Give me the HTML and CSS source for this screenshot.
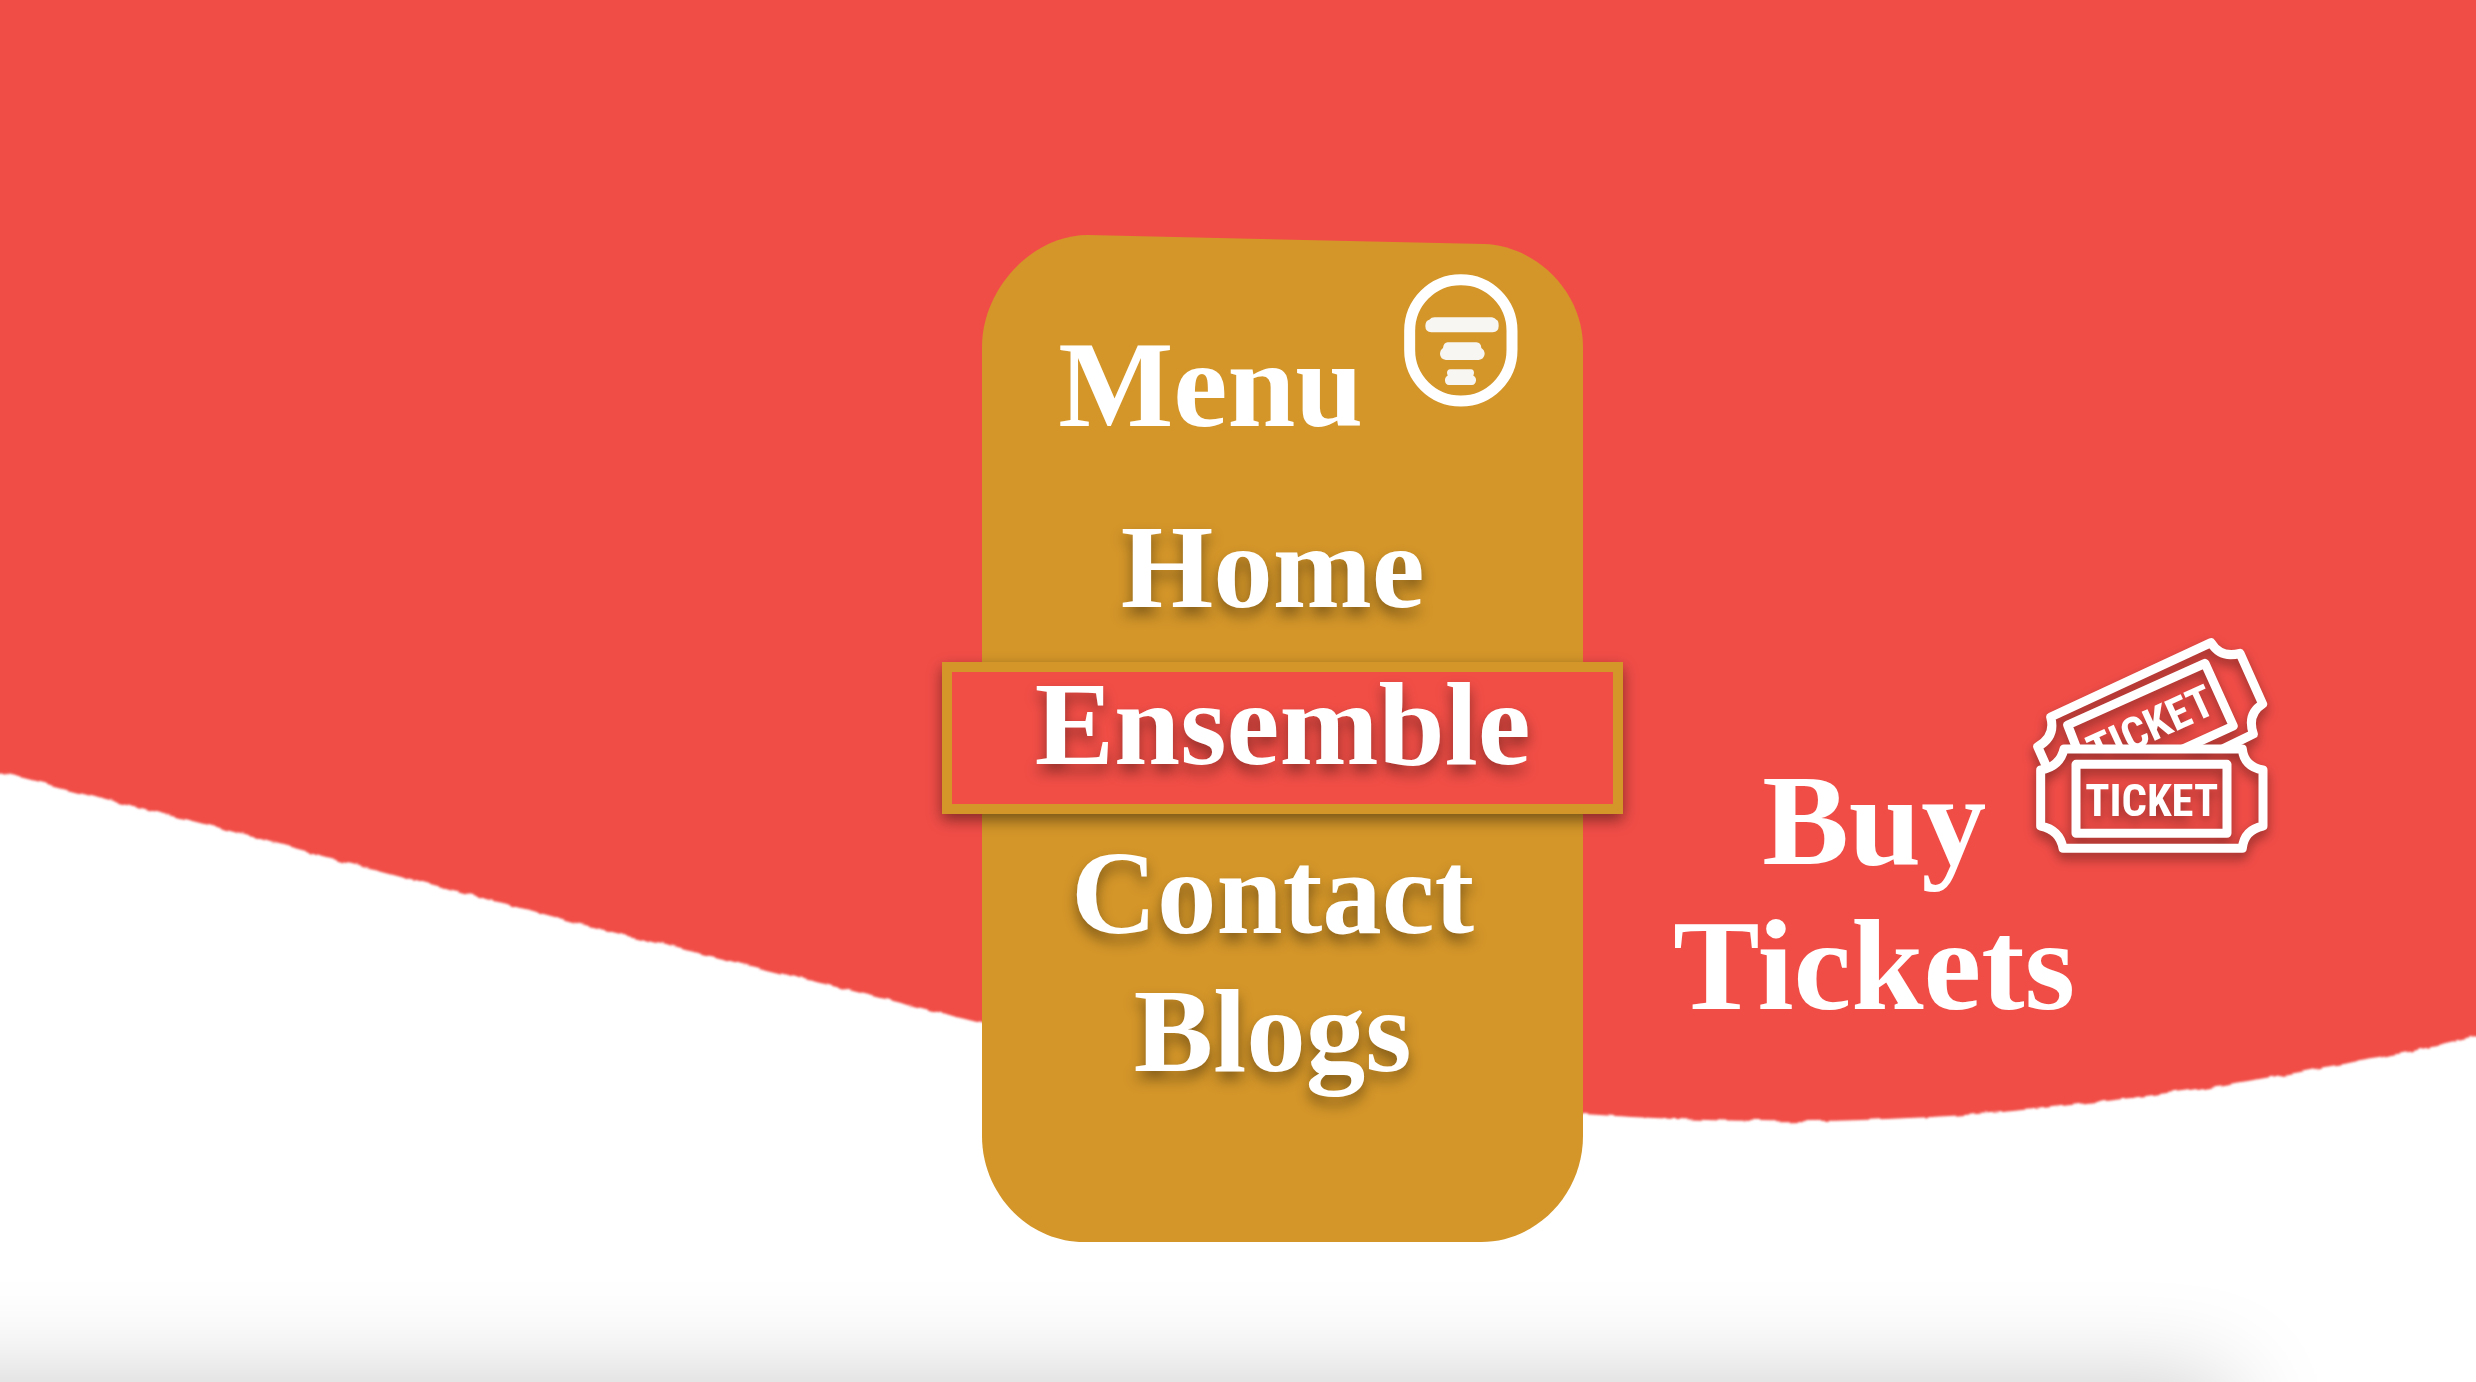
FILE: index.html
```html
<!DOCTYPE html>
<html lang="en">
<head>
<meta charset="utf-8">
<title>Ensemble</title>
<link rel="stylesheet" href="styles.css">
</head>
<body>
<div class="page">
  <svg class="wave" viewBox="0 0 2476 1382" preserveAspectRatio="none" aria-hidden="true">
    <defs>
      <filter id="torn" x="-2%" y="-2%" width="104%" height="104%">
        <feTurbulence type="fractalNoise" baseFrequency="0.06" numOctaves="2" seed="3" result="noise"/>
        <feDisplacementMap in="SourceGraphic" in2="noise" scale="6" xChannelSelector="R" yChannelSelector="G"/>
        <feGaussianBlur stdDeviation="1"/>
      </filter>
    </defs>
    <path filter="url(#torn)" fill="#f14e46" d="M-30 -30H2506V1027L2476 1037Q2410 1053 2331 1066Q2265 1079 2197 1089Q2130 1099 2062 1106Q1975 1116 1887 1119Q1820 1122 1759 1121Q1670 1120 1583 1114C1380 1105 1180 1073 982 1023L800 978L600 929L400 876L200 823L0 772L-30 765Z"/>
  </svg>

  <main class="layout">
    <section class="panel">
      <svg class="panel-shape" viewBox="0 0 601 1008" preserveAspectRatio="none" aria-hidden="true">
        <path fill="#d49629" d="M0 112C0 54 50 0 106 0L502 9C556 11 601 58 601 112V902C601 960 555 1008 499 1008H102C46 1008 0 960 0 902Z"/>
      </svg>
      <header class="panel-head">
        <h1 class="title">Menu</h1>
        <button class="toggle" type="button" aria-label="Toggle menu">
          <svg width="114" height="134" viewBox="0 0 342 402" aria-hidden="true">
            <rect x="17" y="17" width="307" height="364" rx="153" ry="153" fill="none" stroke="#fff" stroke-width="33"/>
            <g fill="#f8f6f2">
              <path d="M82 130H264Q273 132 278 138Q284 140 284 156Q284 174 266 175H82Q64 174 64 156Q64 140 76 137Q82 130 92 130Z"/>
              <path d="M131 205H217Q231 206 232 222Q242 228 242 240Q240 256 224 258H126Q109 256 108 240Q108 228 117 222Q119 206 131 205Z"/>
              <path d="M139 286H201Q210 287 210 297L208 305Q217 309 216 320Q214 332 204 333H135Q124 332 123 320Q122 309 131 305L129 297Q129 287 139 286Z"/>
            </g>
          </svg>
        </button>
      </header>
      <nav aria-label="Main">
        <ul class="links">
          <li><a class="link" href="#home">Home</a></li>
          <li><a class="link link-active" href="#ensemble" aria-current="page">Ensemble</a></li>
          <li><a class="link" href="#contact">Contact</a></li>
          <li><a class="link" href="#blogs">Blogs</a></li>
        </ul>
      </nav>
    </section>

    <a class="buy" href="#tickets">
      <span class="buy-label">Buy Tickets</span>
      <svg class="buy-icon" width="270" height="250" viewBox="0 0 810 750" aria-hidden="true">
        <defs><clipPath id="behind"><path d="M0 0H810V385H0Z"/></clipPath></defs>
        <g fill="none" stroke="#fff" stroke-width="27" stroke-linejoin="round" stroke-linecap="round">
          <path d="M78 436L53 380Q108 350 92 291L573 68Q602 116 660 100L728 252Q680 282 700 342L612 385"/>
          <path clip-path="url(#behind)" d="M176 400L143 315L555 130L640 318L460 400"/>
          <path d="M132 387H667Q672 440 729 450V618Q672 630 667 685H129Q120 630 62 618V450Q120 440 132 387Z"/>
          <rect x="168" y="433" width="453" height="207"/>
        </g>
        <g class="ticket-text" fill="#fff" text-anchor="middle">
          <g clip-path="url(#behind)"><text x="391" y="364" transform="rotate(-24.5 391 316)">TICKET</text></g>
          <text x="395" y="587">TICKET</text>
        </g>
      </svg>
    </a>
  </main>
  <div class="floor-shadow"></div>
</div>
</body>
</html>
```

FILE: styles.css
```css
* {
  box-sizing: border-box;
}

body {
  margin: 0;
  background: #fff;
  color: #fff;
  font-family: "Liberation Serif", "Times New Roman", serif;
  font-weight: 700;
}

.page {
  position: relative;
  min-height: 100vh;
  overflow: hidden;
}

.wave {
  position: absolute;
  inset: 0;
  width: 100%;
  height: 100%;
}

.layout {
  position: relative;
  display: grid;
  grid-template-columns: minmax(0, 11fr) 601px minmax(0, 10fr);
  align-items: start;
  padding: 235px 0 139px;
}

.panel {
  position: relative;
  grid-column: 2;
  padding: 39px 0 142px;
}

.panel-shape {
  position: absolute;
  inset: 0;
  width: 100%;
  height: 100%;
}

.panel-head {
  position: relative;
  display: flex;
  justify-content: space-between;
  align-items: flex-start;
  padding: 0 65px 0 76px;
}

.title {
  margin: 0;
  padding-top: 42px;
  font-size: 122px;
  line-height: 138px;
}

.toggle {
  display: flex;
  padding: 0;
  border: 0;
  background: none;
  cursor: pointer;
}

.links {
  position: relative;
  margin: 44px 0 0;
  padding: 0;
  list-style: none;
}

.link {
  display: block;
  padding-right: 20px;
  color: #fff;
  font-size: 119px;
  line-height: 138px;
  text-align: center;
  text-decoration: none;
  text-shadow: 0 8px 14px rgba(0, 0, 0, 0.4);
}

.link-active {
  margin: 26px -40px 10px;
  padding: 2px 0 30px;
  border: 10px solid #d49629;
  background: #f14e46;
  line-height: 100px;
  box-shadow: 0 6px 14px rgba(0, 0, 0, 0.45);
}

.buy {
  grid-column: 3;
  display: flex;
  align-items: flex-start;
  margin: 385px 0 0 80px;
  color: #fff;
  text-decoration: none;
}

.buy-label {
  width: 422px;
  padding-top: 128px;
  font-size: 130px;
  line-height: 145px;
  text-align: center;
}

.buy-icon {
  flex: none;
  margin-left: -65px;
  overflow: visible;
  filter: drop-shadow(0 6px 6px rgba(0, 0, 0, 0.4));
}

.ticket-text {
  font-family: "Liberation Sans Narrow", "Roboto Condensed", "Open Sans Condensed", "Liberation Sans", sans-serif;
  font-size: 134px;
  font-weight: 700;
}

.floor-shadow {
  position: absolute;
  left: -200px;
  right: 10%;
  top: 100%;
  height: 200px;
  box-shadow: 0 0 100px rgba(0, 0, 0, 0.21);
}
```
